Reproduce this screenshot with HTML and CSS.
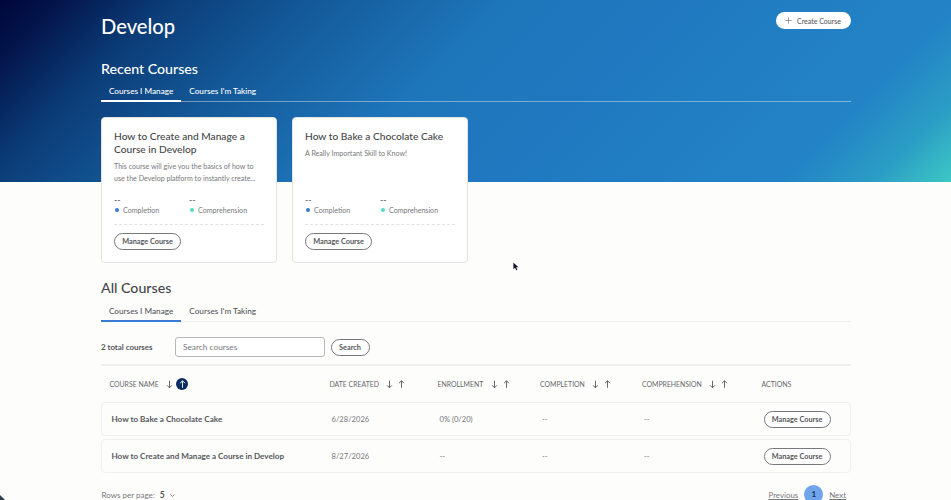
FILE: index.html
```html
<!DOCTYPE html>
<html lang="en">
<head>
    <meta charset="UTF-8">
    <meta name="viewport" content="width=device-width, initial-scale=1.0">
    <title>Develop</title>
    <link rel="stylesheet" href="styles.css">
</head>
<body>
    <main class="page">
        <header class="page-head">
            <h1>Develop</h1>
            <button class="create-btn">
                <svg class="plus-icon" viewBox="0 0 10 10"><path d="M5 0.5v9M0.5 5h9"></path></svg>
                Create Course
            </button>
        </header>

        <h2 class="section-title recent-title">Recent Courses</h2>
        <nav class="tabs tabs-light">
            <a class="tab active">Courses I Manage</a>
            <a class="tab">Courses I'm Taking</a>
        </nav>

        <section class="cards">
            <article class="card">
                <h3>How to Create and Manage a Course in Develop</h3>
                <p class="card-desc">This course will give you the basics of how to use the Develop platform to instantly create...</p>
                <div class="stats">
                    <div class="stat">
                        <span class="stat-value">--</span>
                        <span class="stat-label"><i class="dot dot-blue"></i>Completion</span>
                    </div>
                    <div class="stat">
                        <span class="stat-value">--</span>
                        <span class="stat-label"><i class="dot dot-teal"></i>Comprehension</span>
                    </div>
                </div>
                <button class="pill-btn">Manage Course</button>
            </article>
            <article class="card">
                <h3>How to Bake a Chocolate Cake</h3>
                <p class="card-desc">A Really Important Skill to Know!</p>
                <div class="stats">
                    <div class="stat">
                        <span class="stat-value">--</span>
                        <span class="stat-label"><i class="dot dot-blue"></i>Completion</span>
                    </div>
                    <div class="stat">
                        <span class="stat-value">--</span>
                        <span class="stat-label"><i class="dot dot-teal"></i>Comprehension</span>
                    </div>
                </div>
                <button class="pill-btn">Manage Course</button>
            </article>
        </section>

        <h2 class="section-title all-title">All Courses</h2>
        <nav class="tabs tabs-dark">
            <a class="tab active">Courses I Manage</a>
            <a class="tab">Courses I'm Taking</a>
        </nav>

        <div class="search-row">
            <strong class="total">2 total courses</strong>
            <input class="search-input" type="text" placeholder="Search courses">
            <button class="pill-btn search-btn">Search</button>
        </div>

        <div class="course-table">
            <div class="grid-row head-row">
                <div class="th"><span class="th-label">COURSE NAME</span>
                    <svg class="sort" viewBox="0 0 10 12"><path d="M5 1v10M1.5 7.5L5 11l3.5-3.5"></path></svg>
                    <span class="sort-active"><svg class="sort" viewBox="0 0 10 12"><path d="M5 11V1M1.5 4.5L5 1l3.5 3.5"></path></svg></span>
                </div>
                <div class="th"><span class="th-label">DATE CREATED</span>
                    <svg class="sort" viewBox="0 0 10 12"><path d="M5 1v10M1.5 7.5L5 11l3.5-3.5"></path></svg>
                    <svg class="sort" viewBox="0 0 10 12"><path d="M5 11V1M1.5 4.5L5 1l3.5 3.5"></path></svg>
                </div>
                <div class="th"><span class="th-label">ENROLLMENT</span>
                    <svg class="sort" viewBox="0 0 10 12"><path d="M5 1v10M1.5 7.5L5 11l3.5-3.5"></path></svg>
                    <svg class="sort" viewBox="0 0 10 12"><path d="M5 11V1M1.5 4.5L5 1l3.5 3.5"></path></svg>
                </div>
                <div class="th"><span class="th-label">COMPLETION</span>
                    <svg class="sort" viewBox="0 0 10 12"><path d="M5 1v10M1.5 7.5L5 11l3.5-3.5"></path></svg>
                    <svg class="sort" viewBox="0 0 10 12"><path d="M5 11V1M1.5 4.5L5 1l3.5 3.5"></path></svg>
                </div>
                <div class="th"><span class="th-label">COMPREHENSION</span>
                    <svg class="sort" viewBox="0 0 10 12"><path d="M5 1v10M1.5 7.5L5 11l3.5-3.5"></path></svg>
                    <svg class="sort" viewBox="0 0 10 12"><path d="M5 11V1M1.5 4.5L5 1l3.5 3.5"></path></svg>
                </div>
                <div class="th"><span class="th-label">ACTIONS</span></div>
            </div>
            <div class="grid-row course-row">
                <div class="course-name">How to Bake a Chocolate Cake</div>
                <div>6/28/2026</div>
                <div>0% (0/20)</div>
                <div>--</div>
                <div>--</div>
                <div><button class="pill-btn">Manage Course</button></div>
            </div>
            <div class="grid-row course-row">
                <div class="course-name">How to Create and Manage a Course in Develop</div>
                <div>8/27/2026</div>
                <div>--</div>
                <div>--</div>
                <div>--</div>
                <div><button class="pill-btn">Manage Course</button></div>
            </div>
        </div>

        <footer class="table-foot">
            <div class="rows-per-page">Rows per page: <b>5</b>
                <svg class="chevron" viewBox="0 0 10 6"><path d="M1 1l4 4 4-4"></path></svg>
            </div>
            <div class="pager">
                <a class="page-link">Previous</a>
                <span class="page-num">1</span>
                <a class="page-link">Next</a>
            </div>
        </footer>
    </main>

    <svg class="cursor" viewBox="0 0 8 12"><path d="M0.5 0.5v9l2.2-2 1.6 3.6 1.5-.7-1.6-3.4h3z"></path></svg>
    <svg class="corner-mark" viewBox="0 0 6 5"><path d="M0 0l5 5H0z"></path></svg>
</body>
</html>
```

FILE: styles.css
```css
* {
    box-sizing: border-box;
}
html, body {
    height: 500px;
    overflow: hidden;
}
body {
    margin: 0;
    position: relative;
    color: #55565b;
    font-family: "Lato", Arial, sans-serif;
    font-size: 8px;
    background: #fdfdfc linear-gradient(135deg, #00063a 0%, #03144a 5%, #0c3d78 15%, #145a9a 28%, #1e76ba 45%, #2079c0 60%, #2383c6 85%, #2b9dc4 93%, #3cc8c4 100%) no-repeat 0 0 / 100% 182px;
}
button {
    font-family: inherit;
    cursor: pointer;
}
.page {
    width: 750px;
    margin-left: 101px;
}

/* header */
.page-head {
    display: flex;
    justify-content: space-between;
    align-items: flex-start;
    height: 60px;
    padding-top: 12px;
}
h1 {
    margin: 0;
    color: #fff;
    font-size: 20.2px;
    line-height: 28px;
    font-weight: 500;
}
.create-btn {
    display: flex;
    align-items: center;
    gap: 5px;
    width: 75px;
    height: 17px;
    padding: 0 0 0 9px;
    border: 0;
    border-radius: 9px;
    background: #fff;
    color: #55565b;
    font-size: 7px;
    font-weight: 500;
}
.plus-icon {
    width: 7px;
    height: 7px;
    fill: none;
    stroke: #77787c;
    stroke-width: 1;
}
.section-title {
    margin: 0;
    font-size: 14.2px;
    line-height: 18px;
    font-weight: 500;
}
.recent-title {
    color: #fff;
}
.all-title {
    margin-top: 16px;
    color: #45464a;
}

/* tabs */
.tabs {
    display: flex;
    height: 21px;
    border-bottom: 1px solid #eee;
}
.tabs-light {
    margin-top: 3px;
    border-bottom-color: rgba(255, 255, 255, 0.4);
}
.tabs-dark {
    margin-top: 4px;
}
.tab {
    height: 21px;
    padding: 0 8px;
    border-bottom: 2px solid transparent;
    font-size: 8.2px;
    line-height: 20px;
    font-weight: 500;
}
.tabs-light .tab {
    color: #fff;
}
.tabs-light .tab.active {
    border-bottom-color: #fff;
}
.tabs-dark .tab.active {
    border-bottom-color: #3a7bd5;
}

/* recent course cards */
.cards {
    display: flex;
    gap: 15px;
    margin-top: 15px;
}
.card {
    display: flex;
    flex-direction: column;
    width: 176px;
    height: 146px;
    padding: 11.5px 12px 12px;
    border: 1px solid #e4e4e6;
    border-radius: 4px;
    background: #fff;
}
.card h3 {
    margin: 0;
    color: #45464a;
    font-size: 10.2px;
    line-height: 13px;
    font-weight: 500;
}
.card-desc {
    margin: 5px 0 0;
    color: #77787c;
    font-size: 7.1px;
    line-height: 12px;
}
.stats {
    display: flex;
    margin-top: auto;
    padding-bottom: 8.5px;
    border-bottom: 1px dashed #e2e2e2;
}
.stat {
    width: 76px;
}
.stat-value, .stat-label {
    display: block;
    line-height: 11px;
}
.stat-value {
    font-size: 9px;
}
.stat-label {
    color: #77787c;
    font-size: 7.1px;
}
.dot {
    display: inline-block;
    width: 4px;
    height: 4px;
    margin-right: 4.5px;
    margin-left: 0.5px;
    border-radius: 50%;
    vertical-align: 0.5px;
}
.dot-blue { background: #3a78d2; }
.dot-teal { background: #4fdcc4; }
.pill-btn {
    display: block;
    width: 67px;
    height: 17px;
    margin: 0;
    padding: 0;
    border: 1px solid #77787c;
    border-radius: 9px;
    background: #fff;
    color: #55565b;
    font-size: 7.3px;
    font-weight: 700;
}
.card .pill-btn {
    margin-top: 8px;
}

/* search */
.search-row {
    display: flex;
    align-items: center;
    margin-top: 15px;
    padding-bottom: 7px;
    border-bottom: 2px solid #f0f0f2;
}
.total {
    width: 74px;
    font-size: 7.9px;
}
.search-input {
    width: 150px;
    height: 20px;
    padding: 0 7px;
    border: 1px solid #b8b8ba;
    border-radius: 3px;
    background: #fff;
    font-family: inherit;
    font-size: 8.3px;
}
.search-input::placeholder {
    color: #77787c;
    opacity: 1;
}
.search-btn {
    width: 39px;
    margin-left: 5.5px;
}

/* table */
.grid-row {
    display: grid;
    grid-template-columns: 220px 108px 102.5px 102px 119.5px auto;
    align-items: center;
}
.head-row {
    height: 36px;
    padding-left: 8.5px;
}
.th {
    display: flex;
    align-items: center;
    color: #66676b;
    font-size: 6.9px;
}
.th-label {
    margin-right: 7.5px;
}
.sort {
    flex: none;
    width: 7px;
    height: 8.5px;
    margin-right: 5px;
    fill: none;
    stroke: #55565b;
    stroke-width: 1.3;
}
.sort-active {
    display: flex;
    align-items: center;
    justify-content: center;
    width: 12px;
    height: 12px;
    margin-left: -2px;
    border-radius: 50%;
    background: #0b2c63;
}
.sort-active .sort {
    margin: 0;
    stroke: #fff;
}
.course-row {
    height: 34px;
    margin-bottom: 3px;
    padding-left: 9.5px;
    border: 1px solid #f0f0f2;
    border-radius: 4px;
    color: #77787c;
    font-size: 7.6px;
}
.course-name {
    color: #55565b;
    font-size: 8.1px;
    font-weight: 700;
}

/* footer */
.table-foot {
    display: flex;
    justify-content: space-between;
    align-items: center;
    height: 19px;
    margin-top: 12px;
    padding: 0 5px 0 0.5px;
    color: #77787c;
    font-size: 8px;
}
.rows-per-page b {
    margin-left: 3px;
    color: #55565b;
    font-size: 8.5px;
}
.chevron {
    width: 5px;
    height: 3px;
    margin-left: 3px;
    vertical-align: 1px;
    fill: none;
    stroke: #55565b;
    stroke-width: 1.4;
}
.pager {
    display: flex;
    align-items: center;
    gap: 6px;
}
.page-link {
    text-decoration: underline;
    font-size: 7.9px;
}
.page-num {
    width: 19px;
    height: 19px;
    border-radius: 50%;
    background: #6ea4ea;
    color: #16325c;
    font-size: 8px;
    font-weight: 700;
    line-height: 19px;
    text-align: center;
}

/* screen recording leftovers */
.cursor {
    position: absolute;
    left: 513px;
    top: 262px;
    width: 6px;
    height: 9px;
    fill: #14182c;
}
.corner-mark {
    position: absolute;
    left: 0;
    bottom: 0;
    width: 6px;
    height: 5px;
    fill: #2a3d4a;
}
```
